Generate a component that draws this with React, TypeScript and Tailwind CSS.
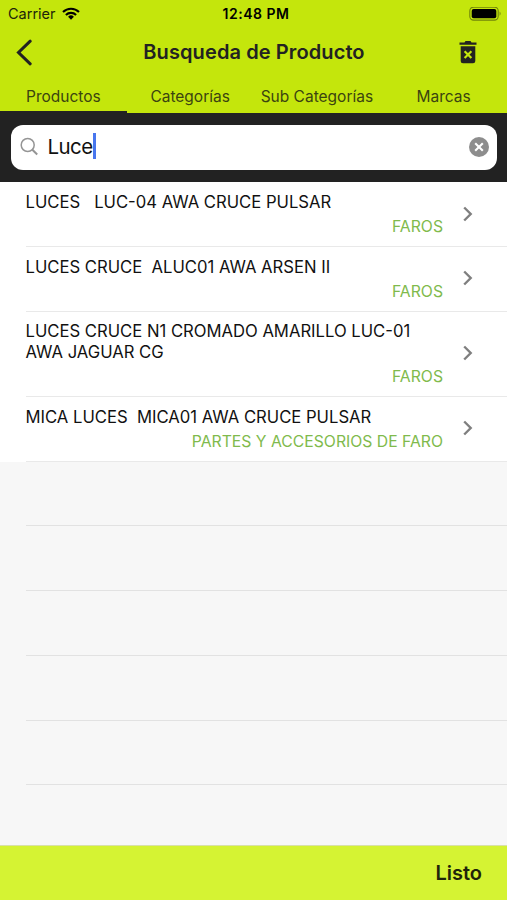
import React, { useState } from 'react';

const products = [
  { id: 1, lines: ['LUCES   LUC-04 AWA CRUCE PULSAR'], category: 'FAROS' },
  { id: 2, lines: ['LUCES CRUCE  ALUC01 AWA ARSEN II'], category: 'FAROS' },
  { id: 3, lines: ['LUCES CRUCE N1 CROMADO AMARILLO LUC-01', 'AWA JAGUAR CG'], category: 'FAROS' },
  { id: 4, lines: ['MICA LUCES  MICA01 AWA CRUCE PULSAR'], category: 'PARTES Y ACCESORIOS DE FARO' }
];

const tabs = ['Productos', 'Categorías', 'Sub Categorías', 'Marcas'];

const StatusBar: React.FC = () => (
  <div className="grid h-7 grid-cols-3 items-center pl-2 pr-[5px] text-black">
    <div className="flex items-center gap-[6px]">
      <span className="text-[14.5px] leading-5 text-[#20240a]">Carrier</span>
      <svg className="h-[13px] w-[18px] -translate-y-px" viewBox="0 0 18 13" fill="none" stroke="currentColor" strokeWidth="2.1">
        <path d="M1 5.1a11.4 11.4 0 0 1 16 0" />
        <path d="M3.9 8a7.3 7.3 0 0 1 10.2 0" />
        <path d="M9 12.7 6.1 9.8a4.1 4.1 0 0 1 5.8 0z" fill="currentColor" stroke="none" />
      </svg>
    </div>
    <span className="pl-0.5 text-center text-[14px] font-semibold leading-5 tracking-[0.5px] whitespace-nowrap">
      12:48 PM
    </span>
    <svg className="h-[15px] w-[33px] justify-self-end" viewBox="0 0 33 15">
      <rect x="0.8" y="0.1" width="28.4" height="13" rx="3.8" fill="none" stroke="#71850a" strokeWidth="1.1" />
      <rect x="2.7" y="2" width="24.6" height="9.2" rx="2" fill="#000" />
      <path d="M30.6 4.5q2 2.1 0 4.2z" fill="#71850a" />
    </svg>
  </div>
);

const NavBar: React.FC = () => (
  <div className="grid h-12 grid-cols-[60px_1fr_60px] items-center text-[#222]">
    <button aria-label="Volver" className="pl-4">
      <svg className="h-7 w-4" viewBox="0 0 16 28" fill="none" stroke="currentColor" strokeWidth="3">
        <path d="M14.2 3.2 2.5 14.5l11.7 11.3" strokeLinecap="round" strokeLinejoin="miter" />
      </svg>
    </button>
    <h1 className="pl-px text-center text-[20px] font-semibold leading-7 tracking-[0.1px] whitespace-nowrap">
      Busqueda de Producto
    </h1>
    <button aria-label="Eliminar" className="flex justify-end pr-[30px]">
      <svg className="h-[23px] w-[18px]" viewBox="0 0 18 23">
        <path d="M.5 1.5h5L6.500 0h5l1 1.5h5v2.200H.5z" fill="currentColor" />
        <path d="M1.700 5.200h14.600v14.700q0 2.300-2.300 2.300H4q-2.300 0-2.300-2.300z" fill="currentColor" />
        <path d="m5.600 10.200 6.800 6.800m0-6.800-6.800 6.800" stroke="#c4e60c" strokeWidth="2.2" />
      </svg>
    </button>
  </div>
);

const SearchBar: React.FC<{ value: string }> = ({ value }) => (
  <div className="h-[69px] bg-[#222] px-[10.5px] pt-3">
    <div className="flex h-[44.5px] items-center rounded-xl bg-white pl-[9px] pr-2">
      <svg className="h-5 w-[19px]" viewBox="0 0 19 20" fill="none" stroke="#959595" strokeWidth="1.5">
        <circle cx="7.7" cy="8" r="6.5" />
        <path d="m12.4 12.7 4.8 4.8" strokeWidth="2" />
      </svg>
      <span className="ml-[9px] text-[20.5px] leading-7 tracking-[-0.55px] text-[#111]">{value}</span>
      <span className="h-[26px] w-[3px] -translate-y-px bg-[#4876ee]" />
      <svg className="ml-auto h-5 w-5" viewBox="0 0 20 20">
        <circle cx="10" cy="10" r="10" fill="#8d8d8d" />
        <path d="m6.2 6.2 7.600 7.600m0-7.600-7.600 7.600" stroke="#fff" strokeWidth="2.1" />
      </svg>
    </div>
  </div>
);

interface ProductRowProps {
  lines: string[];
  category: string;
}

const ProductRow: React.FC<ProductRowProps> = ({ lines, category }) => (
  <li className="bg-white pl-[25.5px]">
    <div className="flex items-center border-b border-[#e9e9e9] pb-[8.25px] pt-[9.75px]">
      <div className="w-[417.5px]">
        {lines.map((line) => (
          <p key={line} className="h-[20.5px] text-[16.65px] leading-[20.5px] whitespace-pre text-[#111]">
            {line}
          </p>
        ))}
        <p className="mt-[5px] h-[20.25px] text-right text-[15.75px] leading-[20px] text-[#80ba4c]">{category}</p>
      </div>
      <svg className="ml-[18.5px] h-4 w-3 -translate-y-px" viewBox="0 0 12 16" fill="none" stroke="#7f7f7f" strokeWidth="2.4">
        <path d="m2.2 1.5 6.5 6.5-6.5 6.5" />
      </svg>
    </div>
  </li>
);

export default function App() {
  const [activeTab, setActiveTab] = useState('Productos');

  return (
    <div className="flex h-[900px] w-[507px] flex-col overflow-hidden bg-[#f7f7f7] font-['Inter',sans-serif]">
      <header className="h-[113px] bg-[#c4e60c]">
        <StatusBar />
        <NavBar />
        <nav className="flex h-[37px]">
          {tabs.map((tab) => (
            <button
              key={tab}
              onClick={() => setActiveTab(tab)}
              className={`flex-1 basis-0 border-b-2 pt-[7px] text-[15.5px] leading-5 whitespace-nowrap text-[#3b4410] ${
                activeTab === tab ? 'border-[#222]' : 'border-transparent'
              }`}
            >
              {tab}
            </button>
          ))}
        </nav>
      </header>

      <SearchBar value="Luce" />

      <ul className="flex-1">
        {products.map((product) => (
          <ProductRow key={product.id} lines={product.lines} category={product.category} />
        ))}
        {[1, 2, 3, 4, 5].map((n) => (
          <li key={n} className="ml-[25.5px] h-[64.75px] border-b border-[#e2e2e2]" />
        ))}
      </ul>

      <footer className="flex h-[55px] items-center justify-end border-t border-[#d9e0a8] bg-[#d5f333] pr-[25px]">
        <button className="text-[20px] font-semibold leading-7 text-[#20240a]">Listo</button>
      </footer>
    </div>
  );
}
